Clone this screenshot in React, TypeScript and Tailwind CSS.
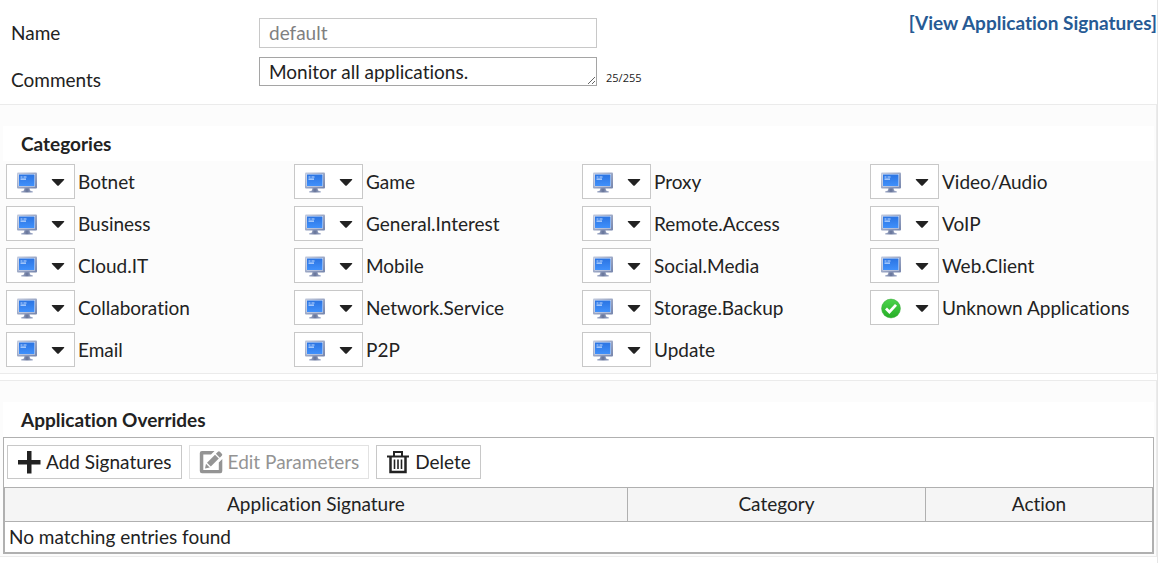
import { useState } from 'react';

type Action = 'monitor' | 'allow';

interface Category {
  name: string;
  action: Action;
}

const MAX_COMMENT = 255;

const columns: Category[][] = [
  [
    { name: 'Botnet', action: 'monitor' },
    { name: 'Business', action: 'monitor' },
    { name: 'Cloud.IT', action: 'monitor' },
    { name: 'Collaboration', action: 'monitor' },
    { name: 'Email', action: 'monitor' },
  ],
  [
    { name: 'Game', action: 'monitor' },
    { name: 'General.Interest', action: 'monitor' },
    { name: 'Mobile', action: 'monitor' },
    { name: 'Network.Service', action: 'monitor' },
    { name: 'P2P', action: 'monitor' },
  ],
  [
    { name: 'Proxy', action: 'monitor' },
    { name: 'Remote.Access', action: 'monitor' },
    { name: 'Social.Media', action: 'monitor' },
    { name: 'Storage.Backup', action: 'monitor' },
    { name: 'Update', action: 'monitor' },
  ],
  [
    { name: 'Video/Audio', action: 'monitor' },
    { name: 'VoIP', action: 'monitor' },
    { name: 'Web.Client', action: 'monitor' },
    { name: 'Unknown Applications', action: 'allow' },
  ],
];

function MonitorIcon() {
  return (
    <svg width="22" height="22" viewBox="0 0 22 22" aria-hidden="true">
      <defs>
        <linearGradient id="frame" x1="0" y1="0" x2="1" y2="1">
          <stop offset="0" stopColor="#c3cce0" />
          <stop offset="1" stopColor="#7584ab" />
        </linearGradient>
        <linearGradient id="screen" x1="0" y1="0" x2="0" y2="1">
          <stop offset="0" stopColor="#2b74e2" />
          <stop offset="1" stopColor="#4090fb" />
        </linearGradient>
        <linearGradient id="foot" x1="0" y1="0" x2="1" y2="0">
          <stop offset="0" stopColor="#a9b4cf" />
          <stop offset="0.5" stopColor="#66749a" />
          <stop offset="1" stopColor="#a9b4cf" />
        </linearGradient>
      </defs>
      <path d="M8.5 17h5l.5 2.5 3 1q.5 1-1 1H6q-1.500 0-1-1l3-1z" fill="url(#foot)" />
      <rect x="1" y="1.500" width="20" height="16" rx="1" fill="url(#frame)" />
      <rect x="2.500" y="3" width="16.500" height="12.500" fill="#dfe8f8" />
      <rect x="3" y="3.500" width="15.500" height="11.500" fill="url(#screen)" />
      <path d="M4.500 5.500h2v1h-2zM7.500 5.500h3v1h-3zM4.500 7.500h5.500v1.200h-5.500z" fill="#c4dcff" />
    </svg>
  );
}

function AllowIcon() {
  return (
    <svg width="22" height="22" viewBox="0 0 22 22" aria-hidden="true">
      <defs>
        <linearGradient id="allow" x1="0" y1="0" x2="0" y2="1">
          <stop offset="0" stopColor="#4cd34c" />
          <stop offset="1" stopColor="#25ae25" />
        </linearGradient>
      </defs>
      <circle cx="11" cy="11.5" r="9.4" fill="url(#allow)" stroke="#3cae3c" strokeWidth="0.6" />
      <path d="M6 11.5l3.400 3.400 6.600-7" fill="none" stroke="#fff" strokeWidth="2.800" />
    </svg>
  );
}

function Caret() {
  return (
    <svg width="14" height="8" viewBox="0 0 14 8" aria-hidden="true">
      <path d="M1.400 1h11.200q1.200 0 .4 1L8 7.300q-1 1-2 0L1 2q-.8-1 .4-1z" fill="#222" />
    </svg>
  );
}

function PlusIcon() {
  return (
    <svg width="24" height="24" viewBox="0 0 24 24" aria-hidden="true">
      <path d="M10 1h4.500v9h9v4.500h-9v9H10v-9H1V10h9z" fill="#222" />
    </svg>
  );
}

function EditIcon() {
  return (
    <svg width="24" height="24" viewBox="0 0 24 24" aria-hidden="true" fill="#949494">
      <path d="M3 1h12.500l-3.500 3.500H4.300v15.500h15.500V12.500l3.500-3.500V21q0 2.200-2 2.200H3q-2.200 0-2.200-2.200V3q0-2 2.200-2z" />
      <path d="M7 13.800l3.800 3.800-4.800 1z" />
      <path d="M8 12.800l8-8 3.800 3.800-8 8z" />
      <path d="M16.900 3.800l2-2q1-1 2 0l1.900 1.900q1 1 0 2l-2 2z" />
    </svg>
  );
}

function TrashIcon() {
  return (
    <svg width="24" height="24" viewBox="0 0 24 24" aria-hidden="true" fill="none" stroke="#222" strokeWidth="2">
      <path d="M8 6V2h8v4" />
      <path d="M1 6.500h22" />
      <path d="M4.500 6.500V22h15V6.500" strokeWidth="2.500" />
      <path d="M8.500 9.500v9.500M12 9.500v9.500M15.500 9.500v9.500" strokeWidth="1.600" />
    </svg>
  );
}

function CategoryItem({ category }: { category: Category }) {
  return (
    <li className="flex items-center gap-[3px]">
      <button
        type="button"
        aria-haspopup="menu"
        aria-label={`${category.name} action`}
        className="flex h-[35px] w-[69px] shrink-0 items-center justify-between border border-[#c8c8c8] bg-white px-[9px]"
      >
        {category.action === 'allow' ? <AllowIcon /> : <MonitorIcon />}
        <Caret />
      </button>
      <span>{category.name}</span>
    </li>
  );
}

export default function App() {
  const [comments, setComments] = useState('Monitor all applications.');

  return (
    <div className="min-h-screen bg-white font-['Lato',sans-serif] text-[19px] leading-6 text-[#222] [font-variant-ligatures:none]">
      <main className="mr-px flex min-h-screen flex-col border-r border-[#e6e6e6]">
        <div className="flex items-start justify-between">
          <form className="flex flex-col gap-[9px] pt-[18px] pl-[11px]">
            <div className="flex items-center">
              <label htmlFor="name" className="w-[248px]">Name</label>
              <input
                id="name"
                type="text"
                value="default"
                disabled
                className="h-[30px] w-[338px] border border-[#c8c8c8] bg-white px-[9px] pb-0.5 text-[#808080]"
              />
            </div>
            <div className="flex items-start">
              <label htmlFor="comments" className="w-[248px] pt-[11px] pb-3">Comments</label>
              <textarea
                id="comments"
                rows={1}
                maxLength={MAX_COMMENT}
                value={comments}
                onChange={e => setComments(e.target.value)}
                className="h-[29px] w-[338px] overflow-hidden border border-[#a5a5a5] bg-white px-[9px] py-0.5"
              />
              <span className="pt-[9px] pl-[9px] font-['Open_Sans',sans-serif] text-[11px]">
                {comments.length}/{MAX_COMMENT}
              </span>
            </div>
          </form>
          <a href="#signatures" className="pt-[11px] font-bold text-[#265a94]">
            [View Application Signatures]
          </a>
        </div>

        <section className="border-y border-r border-[#ebebeb] bg-[#fcfcfc] pt-[21px] pr-0.5 pb-1.5 pl-[3px]">
          <h2 className="bg-white px-[18px] pt-1.5 pb-[5px] font-bold">Categories</h2>
          <div className="-mr-1 grid grid-cols-4 pt-[3px] pl-[3px]">
            {columns.map(column => (
              <ul key={column[0].name} className="flex flex-col gap-[7px]">
                {column.map(category => (
                  <CategoryItem key={category.name} category={category} />
                ))}
              </ul>
            ))}
          </div>
        </section>

        <section className="mt-1.5 border-y border-r border-[#ebebeb] bg-[#fcfcfc] pt-[21px] pr-0.5 pb-0.5 pl-[3px]">
          <h2 className="bg-white px-[18px] pt-1.5 pb-[5px] font-bold">Application Overrides</h2>
          <div className="border border-[#b0b0b0] bg-white">
            <div className="flex gap-[7px] px-[3px] pt-[7px] pb-2">
              <button type="button" className="flex h-[34px] items-center gap-[5px] border border-[#c8c8c8] px-[9px]">
                <PlusIcon />
                Add Signatures
              </button>
              <button
                type="button"
                disabled
                className="flex h-[34px] items-center gap-[5px] border border-[#e2e2e2] px-[9px] text-[#949494]"
              >
                <EditIcon />
                Edit Parameters
              </button>
              <button type="button" className="flex h-[34px] items-center gap-[5px] border border-[#c8c8c8] px-[9px]">
                <TrashIcon />
                Delete
              </button>
            </div>
            <table className="w-full table-fixed border-separate border-spacing-0 border border-[#b0b0b0]">
              <thead className="bg-[#f5f5f5]">
                <tr>
                  <th className="h-[34px] w-[54.3%] border-r border-b border-[#b0b0b0] pb-0.5 font-normal">Application Signature</th>
                  <th className="w-[26%] border-r border-b border-[#b0b0b0] pb-0.5 font-normal">Category</th>
                  <th className="border-b border-[#b0b0b0] pb-0.5 font-normal">Action</th>
                </tr>
              </thead>
              <tbody>
                <tr>
                  <td colSpan={3} className="h-[30px] px-1">No matching entries found</td>
                </tr>
              </tbody>
            </table>
          </div>
        </section>
      </main>
    </div>
  );
}
